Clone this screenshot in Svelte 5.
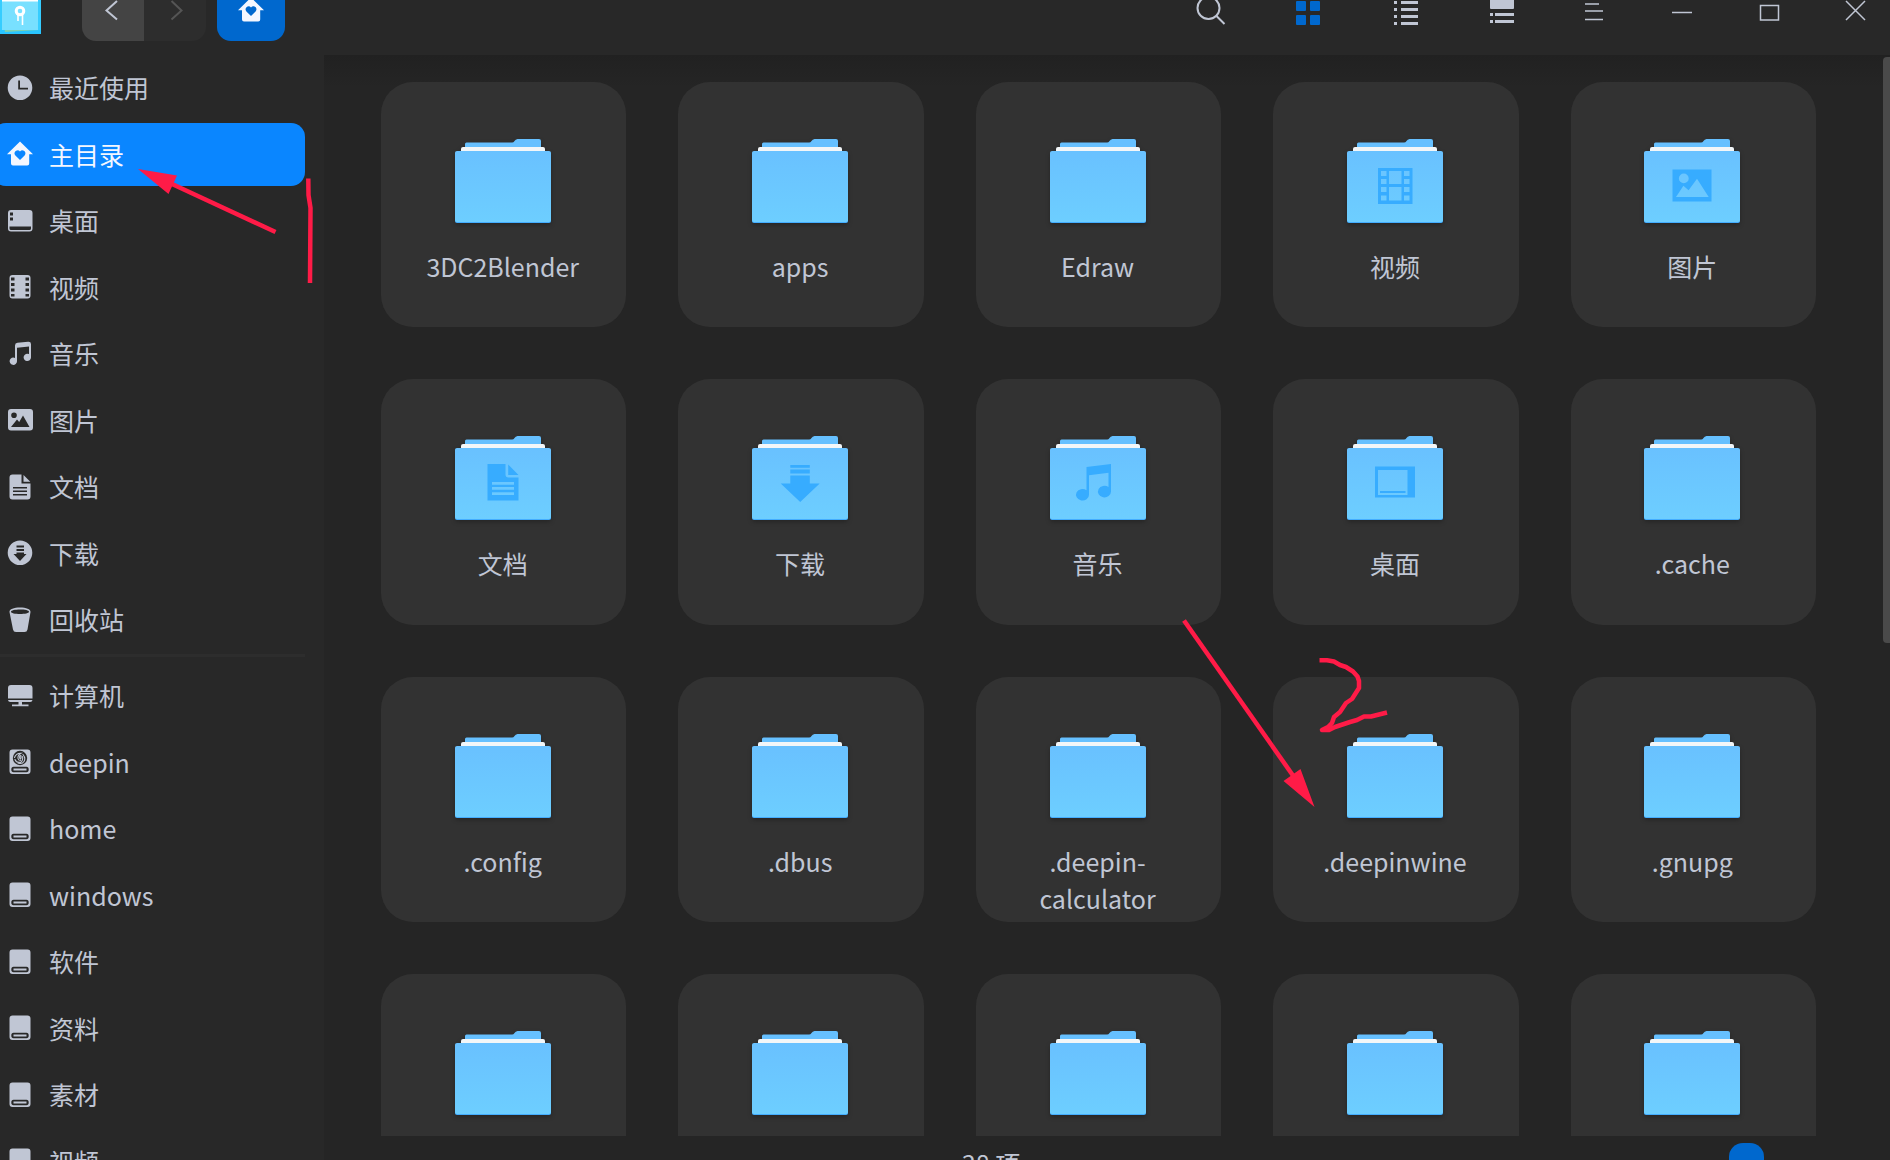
<script>
  let selected = $state('主目录');
  let zoom = $state(43);

  const places = [
    { name: '最近使用', icon: 'recent' },
    { name: '主目录', icon: 'home' },
    { name: '桌面', icon: 'desktop' },
    { name: '视频', icon: 'video' },
    { name: '音乐', icon: 'music' },
    { name: '图片', icon: 'picture' },
    { name: '文档', icon: 'document' },
    { name: '下载', icon: 'download' },
    { name: '回收站', icon: 'trash' },
  ];

  const devices = [
    { name: '计算机', icon: 'computer' },
    { name: 'deepin', icon: 'system' },
    { name: 'home', icon: 'disk' },
    { name: 'windows', icon: 'disk' },
    { name: '软件', icon: 'disk' },
    { name: '资料', icon: 'disk' },
    { name: '素材', icon: 'disk' },
    { name: '视频', icon: 'disk', id: 'video-disk' },
  ];

  const folders = [
    { name: '3DC2Blender' },
    { name: 'apps' },
    { name: 'Edraw' },
    { name: '视频', emblem: 'video' },
    { name: '图片', emblem: 'picture' },
    { name: '文档', emblem: 'document' },
    { name: '下载', emblem: 'download' },
    { name: '音乐', emblem: 'music' },
    { name: '桌面', emblem: 'desktop' },
    { name: '.cache' },
    { name: '.config' },
    { name: '.dbus' },
    { name: '.deepin-calculator' },
    { name: '.deepinwine' },
    { name: '.gnupg' },
    {}, {}, {}, {}, {},
  ];

  // cut-outs are done with fill-rule evenodd
  const icons = {
    recent: 'M13 .5a12.3 12.3 0 1 0 0 24.6a12.3 12.3 0 1 0 0-24.6zM11.2 5.5h1.8v7.3h8v1.7h-9.8z',
    home: 'M13 .5L26 13.3H22.2V22.5q0 2-2 2H6q-2 0-2-2V13.3H0zM13 19l-4.6-4.6c-2.2-2.5.2-5.5 2.7-5.2q1.3.2 1.9 1.3q.6-1.1 1.9-1.3c2.5-.3 4.9 2.7 2.7 5.2z',
    desktop: 'M4 2H22.500q3 0 3 3V20.500q0 3-3 3H4q-3 0-3-3V5q0-3 3-3zM3 4.500V7.500H6V4.500zM3 9.500V12.500H6V9.500zM2.500 18.500V20.500q0 1.500 1.500 1.500H22.500q1.500 0 1.500-1.500V18.500z',
    video: 'M5.500 1H20.500q3 0 3 3V21.500q0 3-3 3H5.500q-3 0-3-3V4q0-3 3-3zM4 3.500V6.500H7.500V3.500zM4 9V12H7.500V9zM4 14.500V17.500H7.500V14.500zM4 20V22.500H7.500V20zM18.500 3.500V6.500H22V3.500zM18.500 9V12H22V9zM18.500 14.500V17.500H22V14.500zM18.500 20V22.500H22V20z',
    music: 'M8 4.500q0-2.500 2.500-2.700L21 .7q3-.3 3 2.300V16.500a3.700 3.700 0 1 1-2-3.400V5.500L10 6.800V20.200a3.700 3.700 0 1 1-2-3.300z',
    picture: 'M4 2H23q3 0 3 3V20.500q0 3-3 3H4q-3 0-3-3V5q0-3 3-3zM7 5.500a2.800 2.800 0 1 0 0 5.600a2.800 2.800 0 1 0 0-5.600zM4 20H22.500L16 8.500L12.200 15L10 12.500z',
    document: 'M5 .5H14.500V9.500H23.500V22.500q0 3-3 3H5.500q-3 0-3-3V3.500q0-3 3-3zM16.500 1L23.300 7.800H16.500zM6 13V14.500H20V13zM6 16.500V18H20V16.500zM6 20V21.500H20V20z',
    download: 'M13 .5a12.300 12.300 0 1 0 0 24.600a12.300 12.300 0 1 0 0-24.600zM9.500 5.500H17V7.500H9.500zM9.500 9H17V11H9.500zM9.500 12.500H17V14H19.500L13 21L6.500 14H9.500z',
    trash: 'M13 .5c6 0 10.800 1.500 10.500 4.500L20.500 22.500q-.5 2.500-3 2.500H9q-2.500 0-3-2.500L2.500 5C2.200 2 7 .5 13 .5zM13 2.500c-5 0-9 .9-9 2.300s4 2.200 9 2.200s9-.8 9-2.200s-4-2.300-9-2.300z',
    computer: 'M4 2H22.500q3 0 3 3V15.500H1V5q0-3 3-3zM1 17H25.500q-.3 2-2.300 2H15V21.500H21.500V23.200H5V21.500H11.500V19H3.300q-2 0-2.300-2z',
    disk: 'M5.500 .5H20.500q3 0 3 3V22q0 3-3 3H5.500q-3 0-3-3V3.500q0-3 3-3zM6.500 17.800q-2.200 0-2.200 2.700t2.200 2.700H19.500q2.200 0 2.200-2.700t-2.200-2.700zM6.500 19.600H19.500V21.400H6.500z',
  };

  const emblems = {
    video: 'M31 29H65.500V65H31zM34 32V37H39.500V32zM34 40V45H39.500V40zM34 48V53H39.500V48zM34 56.500V61.500H39.500V56.500zM42 32V45H54.500V32zM42 48V61.500H54.500V48zM57 32V37H62.500V32zM57 40V45H62.500V40zM57 48V53H62.500V48zM57 56.500V61.500H62.500V56.500z',
    picture: 'M28.500 30.500H67.500V62.500H28.500zM39.800 34.500a4.900 4.900 0 1 0 0 9.800a4.900 4.900 0 1 0 0-9.800zM32 58H64.700L53 39.700L44.600 51.300L39.400 46.700z',
    document: 'M32.500 28H50.500V38.500q0 3 3 3H63.500V64.500H32.500zM53.200 28.500L63.500 39H53.200zM37 46V48.700H59V46zM37 51V53.700H59V51zM37 56.300V59H59V56.300z',
    download: 'M38.300 29H57.800V31.700H38.300zM38.300 33.500H57.800V37.500H38.300zM38.300 39.500H57.800V47.500H67.700L48.200 66L28.700 47.500H38.300z',
    music: 'M36.500 31L61 28V55.500a6.500 5.800 0 1 1-2.500-4.500V36.700L39 39.300V58.700a6.500 5.800 0 1 1-2.500-4.500z',
    desktop: 'M28 30.500H68V61.500H28zM31 34V59H60.500V34zM33 55H58.500V57H33z',
  };
</script>

{#snippet icon(name)}
  <svg class="icon" viewBox="0 0 26 26" aria-hidden="true">
    <path fill="currentColor" fill-rule="evenodd" d={icons[name === 'system' ? 'disk' : name]} />
    {#if name === 'system'}
      <circle cx="13" cy="9" r="7.200" fill="#282828" />
      <g fill="none" stroke="currentColor" stroke-width="1.100" stroke-linecap="round">
        <path d="M7.500 8.500Q9 4 14 4.200Q10.500 6 11 9.500Q11.300 11.500 13.500 11.500" />
        <path d="M16 5.500Q19 9 17 12.500Q15.500 15 12 14.300Q16.500 12.500 15.500 7.500" />
        <path d="M8 10.500Q9.500 14 13 13.300M13 6.500Q12 9 13.500 10Q14.500 9 14 6.500" />
      </g>
    {/if}
  </svg>
{/snippet}

{#snippet placeList(items)}
  {#each items as item}
    <li>
      <button
        class="place"
        class:active={selected === (item.id ?? item.name)}
        onclick={() => (selected = item.id ?? item.name)}
      >
        {@render icon(item.icon)}
        <span>{item.name}</span>
      </button>
    </li>
  {/each}
{/snippet}

<div class="window">
  <header class="titlebar">
    <svg class="logo" viewBox="0 0 48 48" aria-hidden="true">
      <rect width="48" height="48" fill="#29c5ff" />
      <path d="M3 0H48L46 44L12 46z" fill="#7ecfb0" />
      <rect x="4" width="44" height="44" fill="#36cdff" />
      <rect x="9" y="14" width="36" height="30" fill="#78e0ff" />
      <path d="M9 0H45V16H9z" fill="#fff" />
      <path d="M9 16H45" stroke="#78e0ff" stroke-width="1" />
      <circle cx="27" cy="25" r="3.800" fill="none" stroke="#fff" stroke-width="3" />
      <path d="M25 29V35M29.500 29V39" stroke="#fff" stroke-width="1.600" />
    </svg>
    <div class="history">
      <button class="back" aria-label="后退">
        <svg class="glyph" viewBox="0 0 32 32"><path d="M20 7L9.500 16.500L20 25.500" /></svg>
      </button>
      <button class="forward" aria-label="前进" disabled>
        <svg class="glyph" viewBox="0 0 32 32"><path d="M12.500 7L22.500 16.500L12.500 25.500" /></svg>
      </button>
    </div>
    <button class="crumb" aria-label="主目录">{@render icon('home')}</button>

    <div class="tools">
      <button class="tool" aria-label="搜索">
        <svg class="glyph" viewBox="0 0 32 32"><circle cx="13.500" cy="14" r="11" /><path d="M21.500 22L29.500 30" /></svg>
      </button>
      <button class="tool current" aria-label="图标视图">
        <svg class="glyph solid" viewBox="0 0 32 32">
          <rect x="4" y="7" width="10" height="10" rx="1" /><rect x="18" y="7" width="10" height="10" rx="1" />
          <rect x="4" y="21" width="10" height="10" rx="1" /><rect x="18" y="21" width="10" height="10" rx="1" />
        </svg>
      </button>
      <button class="tool" aria-label="列表视图">
        <svg class="glyph solid" viewBox="0 0 32 32">
          <path d="M5 7h3v3H5zM12 7h17v3H12zM5 14h3v3H5zM12 14h17v3H12zM5 21h3v3H5zM12 21h17v3H12zM5 28h3v3H5zM12 28h17v3H12z" />
        </svg>
      </button>
      <button class="tool" aria-label="详细信息">
        <svg class="glyph solid" viewBox="0 0 32 32">
          <rect x="4" y="3" width="24" height="12" rx="1" />
          <path d="M4 19h3v3H4zM9 19h19v3H9zM4 26h3v3H4zM9 26h19v3H9z" />
        </svg>
      </button>
      <button class="control" aria-label="菜单">
        <svg class="glyph thin" viewBox="0 0 32 32"><path d="M7 10H21M7 17H25M7 25.500H25" /></svg>
      </button>
      <button class="control" aria-label="最小化">
        <svg class="glyph thin" viewBox="0 0 32 32"><path d="M7 18.500H27" /></svg>
      </button>
      <button class="control" aria-label="最大化">
        <svg class="glyph thin" viewBox="0 0 32 32"><path d="M8.500 11.500H26.500V26H8.500z" /></svg>
      </button>
      <button class="control" aria-label="关闭">
        <svg class="glyph thin" viewBox="0 0 32 32"><path d="M7 7L26 26M26 7L7 26" /></svg>
      </button>
    </div>
  </header>

  <nav class="sidebar">
    <ul class="places">{@render placeList(places)}</ul>
    <hr />
    <ul class="devices">{@render placeList(devices)}</ul>
  </nav>

  <main>
    <div class="files">
      {#each folders as folder}
        <button class="file">
          <svg class="folder" viewBox="0 0 96 84" aria-hidden="true">
            <defs>
              <linearGradient id="front" x1="0" y1="0" x2="0" y2="1">
                <stop offset="0" stop-color="#69c1ff" />
                <stop offset="1" stop-color="#6dceff" />
              </linearGradient>
            </defs>
            <path d="M10 10V5q0-1.500 1.500-1.500H57q1.500 0 2.500-1.500T62.500 0H84q2 0 2 2V10z" fill="#66c0ff" />
            <path d="M6 13V10q0-2 2-2H88q2 0 2 2V13z" fill="#f3f6f8" />
            <rect y="13" width="96" height="71" rx="2" fill="#43adff" />
            <rect y="12" width="96" height="71" rx="2" fill="url(#front)" />
            {#if folder.emblem}
              <path d={emblems[folder.emblem]} fill="#37acff" fill-rule="evenodd" />
            {/if}
          </svg>
          {#if folder.name}<span>{folder.name}</span>{/if}
        </button>
      {/each}
    </div>
    <div class="scrollbar"></div>
    <footer>
      <span class="count">38 项</span>
      <input type="range" aria-label="图标大小" bind:value={zoom} />
    </footer>
  </main>

  <!-- hand-drawn marks over the window -->
  <svg class="marks" width="1890" height="1160" viewBox="0 0 1890 1160" aria-hidden="true">
    <g fill="none" stroke="#ff1b47" stroke-width="4.500">
      <path d="M172 184L275.500 232" />
      <path d="M308.300 178.500L308.500 195L310.500 208L310 283" />
      <path d="M1184 620.500L1294 777" />
      <path
        stroke-linejoin="round"
        d="M1319.500 660.300H1327L1334 661.500L1340 665L1346 667L1353 671.500L1357.500 676.500L1359 681V688L1352 699L1346 703L1340 712L1334 717L1332 723L1328 727L1322 730H1329L1335 727L1350 722L1357 720L1364 716.500H1371L1387 712.500"
      />
    </g>
    <path fill="#ff1b47" d="M138 169L177 175.500L168.500 194zM1314.500 807L1300.500 769L1283.500 781z" />
  </svg>
</div>

<style>
  :global(body) {
    margin: 0;
    background: #252525;
  }

  .window {
    position: relative;
    display: grid;
    grid-template-columns: 324px 1fr;
    grid-template-rows: 55px 1fr;
    height: 100vh;
    overflow: hidden;
    color: #c0c6d4;
    font-family: 'Noto Sans CJK SC', sans-serif;
    font-size: 25px;
    line-height: 37px;
  }

  button {
    margin: 0;
    padding: 0;
    border: 0;
    background: none;
    color: inherit;
    font: inherit;
  }

  .icon {
    flex: none;
    width: 26px;
    height: 26px;
  }

  .glyph {
    width: 32px;
    height: 32px;
    fill: none;
    stroke: currentColor;
    stroke-width: 2;
  }

  .glyph.thin {
    stroke-width: 1.5;
  }

  .glyph.solid {
    fill: currentColor;
    stroke: none;
  }

  /* title bar */
  .titlebar {
    grid-column: 1 / -1;
    display: flex;
    align-items: flex-end;
    box-sizing: border-box;
    height: 55px;
    padding-bottom: 14px;
    background: #282828;
    overflow: hidden;
  }

  .titlebar button {
    display: flex;
    align-items: center;
    justify-content: center;
    height: 62px;
  }

  .logo {
    flex: none;
    width: 48px;
    height: 48px;
    margin: 0 41px 7px -7px;
  }

  .history {
    display: flex;
    border-radius: 14px;
    overflow: hidden;
  }

  .history button {
    width: 62px;
    background: #2d2d2d;
  }

  .history .back {
    background: #444;
  }

  .history .forward {
    color: #555;
  }

  .titlebar .crumb {
    width: 68px;
    margin-left: 11px;
    border-radius: 14px;
    background: #0068ce;
    color: #f4f7ff;
  }

  .tools {
    display: flex;
    margin-left: auto;
    margin-right: -8px;
  }

  .tool {
    width: 97px;
  }

  .tool.current {
    color: #0068ce;
  }

  .control {
    width: 87px;
  }

  /* sidebar */
  .sidebar {
    min-height: 0;
    padding-top: 1px;
    background: #282828;
    overflow: hidden;
  }

  .sidebar ul {
    display: flex;
    flex-direction: column;
    justify-content: space-between;
    margin: 0 19px 0 -8px;
    padding: 0;
    list-style: none;
  }

  .places {
    height: 595px;
  }

  .devices {
    height: 529px;
  }

  .sidebar hr {
    height: 3px;
    margin: 3px 19px 7px 0;
    border: 0;
    background: #2d2d2d;
  }

  .place {
    display: flex;
    align-items: center;
    gap: 16px;
    width: 100%;
    height: 63px;
    padding-left: 15px;
    border-radius: 14px;
    text-align: left;
  }

  .place.active {
    background: #0a86ff;
    color: #f4f7ff;
  }

  /* files */
  main {
    position: relative;
    display: flex;
    flex-direction: column;
    min-width: 0;
    min-height: 0;
    background: linear-gradient(#212121, #252525 32px);
  }

  .files {
    flex: 1;
    display: grid;
    grid-template-columns: repeat(5, 1fr);
    align-content: start;
    gap: 52px;
    min-height: 0;
    padding: 27px 74px 0 57px;
    overflow: hidden;
  }

  .file {
    display: flex;
    flex-direction: column;
    align-items: center;
    gap: 25px;
    box-sizing: border-box;
    aspect-ratio: 1;
    padding: 57px 32px 0 30px;
    border-radius: 32px;
    background: #323232;
  }

  .folder {
    flex: none;
    width: 96px;
    height: 84px;
    filter: drop-shadow(0 2px 2px rgba(0, 0, 0, 0.25));
  }

  .scrollbar {
    position: absolute;
    top: 2px;
    right: 0;
    width: 7px;
    height: 53%;
    border-radius: 4px 0 0 4px;
    background: #4a4a4a;
  }

  footer {
    flex: none;
    display: flex;
    align-items: flex-start;
    height: 24px;
    overflow: hidden;
  }

  .count {
    flex: 1;
    margin-top: 9px;
    text-align: center;
  }

  input[type='range'] {
    width: 200px;
    height: 48px;
    margin: 7px 32px 0 0;
    background: none;
    appearance: none;
  }

  input[type='range']::-webkit-slider-thumb {
    width: 35px;
    height: 48px;
    border-radius: 14px;
    background: #0068ce;
    appearance: none;
  }

  .marks {
    position: absolute;
    top: 0;
    left: 0;
    pointer-events: none;
  }
</style>
